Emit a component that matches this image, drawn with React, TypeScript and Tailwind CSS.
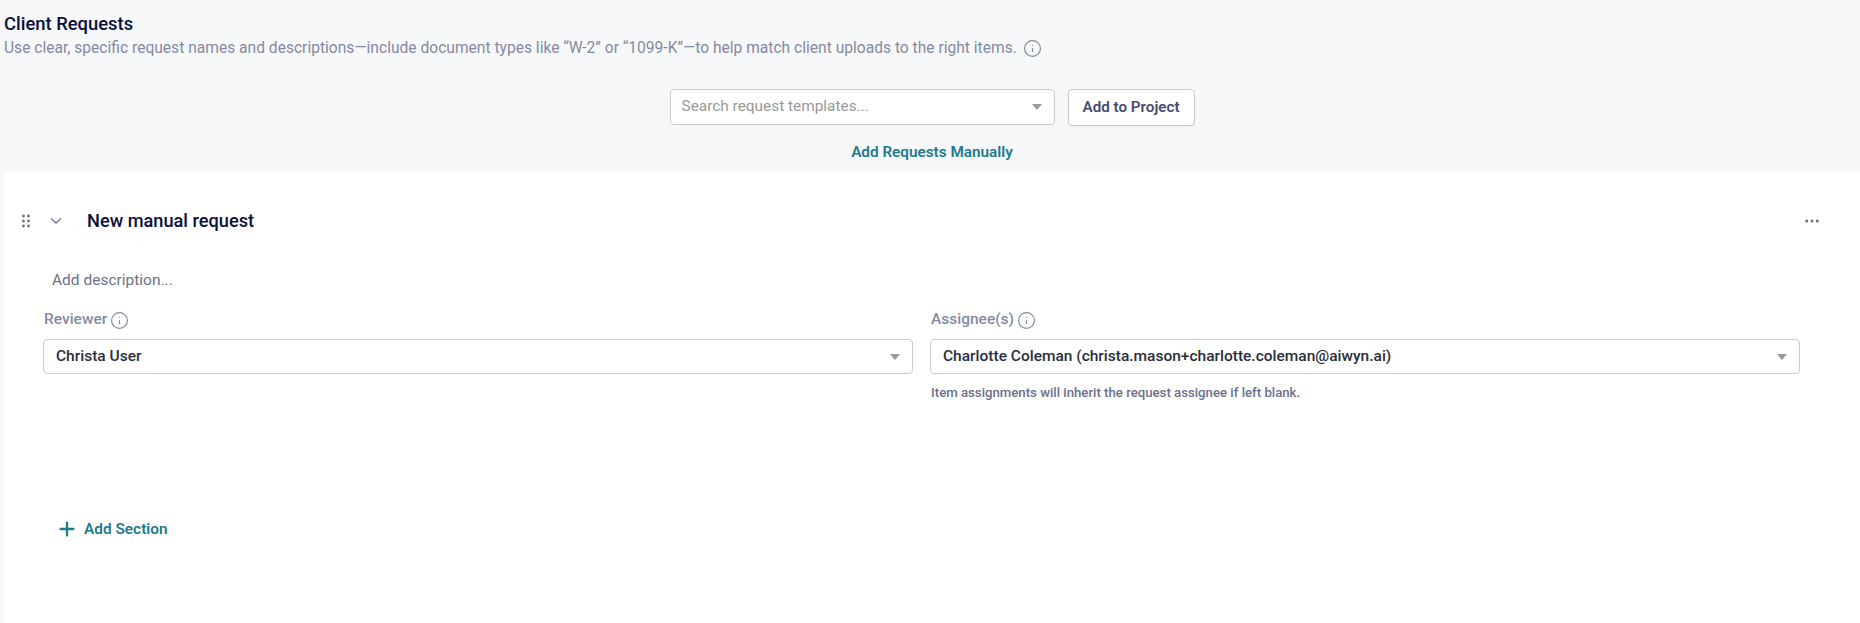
import { ChevronDown, Info, MoreHorizontal, Plus } from "lucide-react";

function Caret() {
  return (
    <svg width="10" height="6" viewBox="0 0 10 6" className="shrink-0 text-[#999999]">
      <path d="M0 0h10L5 6z" fill="currentColor" />
    </svg>
  );
}

function DragDots() {
  return (
    <svg width="8" height="14" viewBox="0 0 8 14" className="shrink-0 text-[#6b7088]">
      <g fill="currentColor">
        <circle cx="1.5" cy="2" r="1.4" />
        <circle cx="6.5" cy="2" r="1.4" />
        <circle cx="1.5" cy="7" r="1.4" />
        <circle cx="6.5" cy="7" r="1.4" />
        <circle cx="1.5" cy="12" r="1.4" />
        <circle cx="6.5" cy="12" r="1.4" />
      </g>
    </svg>
  );
}

function SelectField({ label, value, help }: { label: string; value: string; help?: string }) {
  return (
    <div>
      <div className="flex h-[22px] items-center gap-[3px] pl-[1px] text-[15.5px] font-medium text-[#868aa0]">
        {label}
        <Info className="h-[19px] w-[19px]" strokeWidth={1.5} />
      </div>
      <div className="mt-[8px] flex h-[35px] items-center justify-between rounded border border-[#cccccc] bg-white pl-3 pr-[12px] text-[15.5px] font-medium text-[#2a2e3a]">
        <span>{value}</span>
        <Caret />
      </div>
      {help && <p className="mt-[9px] pl-[1px] text-[13.2px] font-medium text-[#6b7088]">{help}</p>}
    </div>
  );
}

export default function App() {
  return (
    <div className="flex h-[623px] flex-col overflow-hidden bg-[#f7f8fa] font-['Roboto',sans-serif]">
      <header className="pl-1 pt-[13px]">
        <h1 className="text-[18.4px] leading-[22px] font-medium text-[#0b0f3a]">Client Requests</h1>
        <p className="mt-[3px] flex items-center gap-[6px] text-[15.6px] leading-5 text-[#868aa0]">
          Use clear, specific request names and descriptions—include document types like “W-2” or “1099-K”—to help match client uploads to the right items.
          <Info className="h-[19px] w-[19px]" strokeWidth={1.5} />
        </p>
      </header>

      <div className="mt-[31px] flex justify-center gap-[13px] pl-1">
        <div className="flex h-9 w-[385px] items-center justify-between rounded border border-[#cccccc] bg-white pl-[11px] pr-[12px] text-[15.4px] text-[#999999]">
          <span>Search request templates...</span>
          <Caret />
        </div>
        <button className="h-[37px] w-[127px] rounded border border-[#cccccc] bg-white text-[15.2px] font-semibold text-[#464c6e] shadow-xs">
          Add to Project
        </button>
      </div>

      <div className="mt-[16px] pl-1 text-center text-[15.3px] leading-5 font-semibold text-[#1f7a8c]">
        Add Requests Manually
      </div>

      <main className="ml-1 mt-[10px] flex-1 rounded-tl bg-white">
        <div className="flex h-[98px] items-center pl-[18px] pr-[39px]">
          <DragDots />
          <ChevronDown className="ml-[17px] h-[18px] w-[18px] text-[#6b7088]" strokeWidth={1.5} />
          <h2 className="ml-[22px] flex-1 text-[18.2px] font-medium text-[#0b0f3a]">New manual request</h2>
          <MoreHorizontal className="h-[18px] w-[18px] text-[#6b7088]" />
        </div>

        <div className="pl-[48px] text-[15.5px] leading-5 text-[#6b7088]">Add description...</div>

        <div className="mt-[19px] grid grid-cols-2 gap-[17px] pl-[39px] pr-[60px]">
          <SelectField label="Reviewer" value="Christa User" />
          <SelectField
            label="Assignee(s)"
            value="Charlotte Coleman (christa.mason+charlotte.coleman@aiwyn.ai)"
            help="Item assignments will inherit the request assignee if left blank."
          />
        </div>

        <div className="mt-[115px] flex items-center gap-[6px] pl-[52px] text-[15.4px] font-semibold text-[#1f7a8c]">
          <Plus className="h-[22px] w-[22px]" strokeWidth={2.5} />
          Add Section
        </div>
      </main>
    </div>
  );
}
